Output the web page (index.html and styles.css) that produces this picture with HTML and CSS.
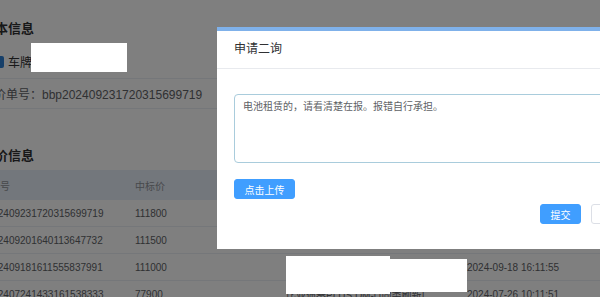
FILE: index.html
```html
<!DOCTYPE html>
<html lang="zh-CN">
<head>
  <meta charset="UTF-8" />
  <meta name="viewport" content="width=device-width, initial-scale=1.0"/>
  <title>申请二询</title>
  <link rel="stylesheet" href="styles.css">
</head>
<body>
  <div class="page">
    <div class="section-title">基本信息</div>
    <div class="info-row">
      <span class="check"></span>
      <span>车牌</span>
    </div>
    <div class="info-row plain">报价单号：bbp202409231720315699719</div>

    <div class="section-title second">报价信息</div>
    <table class="bids">
      <tr class="head">
        <th class="c1">报价单号</th>
        <th class="c2">中标价</th>
        <th class="c3">车型</th>
        <th class="c4">报价时间</th>
      </tr>
      <tr>
        <td>bbp202409231720315699719</td>
        <td>111800</td>
        <td>比亚迪 秦PLUS</td>
        <td>2024-09-23 17:20:31</td>
      </tr>
      <tr>
        <td>bbp202409201640113647732</td>
        <td>111500</td>
        <td>比亚迪 秦PLUS</td>
        <td>2024-09-20 16:40:11</td>
      </tr>
      <tr>
        <td>bbp202409181611555837991</td>
        <td>111000</td>
        <td>比亚迪 秦PLUS</td>
        <td>2024-09-18 16:11:55</td>
      </tr>
      <tr>
        <td>bbp202407241433161538333</td>
        <td>77900</td>
        <td class="model">比亚迪秦PLUS DM-i [同类刷新]</td>
        <td>2024-07-26 10:11:51</td>
      </tr>
    </table>
  </div>

  <div class="mask"></div>

  <div class="dialog">
    <div class="dialog-head">申请二询</div>
    <div class="dialog-body">
      <textarea class="reason" readonly>电池租赁的，请看清楚在报。报错自行承担。</textarea>
      <button class="btn primary upload">点击上传</button>
    </div>
    <div class="dialog-foot">
      <button class="btn primary">提交</button>
      <button class="btn">取消</button>
    </div>
  </div>

  <!-- redactions -->
  <div class="blank plate"></div>
  <div class="blank cell-a"></div>
  <div class="blank cell-b"></div>
</body>
</html>
```

FILE: styles.css
```css
body {
  font-family: "Liberation Sans", "Noto Sans CJK SC", sans-serif;
  margin: 0;
  padding: 0;
  background: #fff;
  color: #606266;
  overflow: hidden;
  height: 297px;
}
.page {
  margin-left: -40px;
  width: 700px;
}
.section-title {
  margin-top: 19px;
  padding-left: 22px;
  height: 20px;
  line-height: 20px;
  font-size: 13px;
  font-weight: bold;
  color: #303133;
}
.section-title.second {
  margin-top: 37px;
}
.info-row {
  display: flex;
  align-items: center;
  gap: 4px;
  padding: 6px 0 0 32px;
  height: 33px;
  font-size: 12px;
  color: #303133;
  border-bottom: 1px solid #ebeef5;
}
.info-row.plain {
  padding: 0 0 0 22px;
  height: 29px;
  color: #606266;
}
.check {
  width: 12px;
  height: 12px;
  border-radius: 2px;
  background: #2d7fd3;
}
.bids {
  margin-top: 4px;
  border-collapse: collapse;
  font-size: 10px;
  width: 700px;
}
.bids th,
.bids td {
  padding: 0 0 0 10px;
  text-align: left;
  white-space: nowrap;
  border-bottom: 1px solid #ebeef5;
}
.bids th {
  height: 30px;
  font-weight: normal;
  color: #909399;
  background: #e6eef8;
  border-bottom: 0;
}
.bids td {
  height: 26px;
}
.c1 { width: 155px; }
.c2 { width: 141px; }
.c3 { width: 171px; }
.model {
  padding-top: 12px;
}
.mask {
  position: fixed;
  inset: 0;
  background: rgba(0, 0, 0, 0.5);
}
.dialog {
  position: absolute;
  left: 217px;
  top: 27px;
  width: 420px;
  background: #fff;
  border-top: 4px solid #7fb1ea;
}
.dialog-head {
  height: 37px;
  line-height: 36px;
  padding-left: 17px;
  font-size: 12px;
  color: #303133;
  border-bottom: 1px solid #e8eaee;
}
.dialog-body {
  padding: 25px 17px 0;
}
.reason {
  display: block;
  box-sizing: border-box;
  width: 100%;
  height: 69px;
  padding: 4px 8px;
  border: 1px solid #a9ccdc;
  border-radius: 4px;
  font-family: inherit;
  font-size: 10px;
  line-height: 16px;
  color: #606266;
  resize: none;
  outline: none;
}
.btn {
  height: 20px;
  padding: 0 10px;
  border: 1px solid #dcdfe6;
  border-radius: 3px;
  background: #fff;
  color: #606266;
  font-family: inherit;
  font-size: 10px;
  white-space: nowrap;
}
.btn.primary {
  background: #409eff;
  border-color: #409eff;
  color: #fff;
}
.upload {
  display: block;
  margin-top: 16px;
  width: 61px;
  padding: 0;
}
.dialog-foot {
  display: flex;
  gap: 10px;
  padding: 5px 0 25px 323px;
}
.dialog-foot .btn {
  width: 41px;
  padding: 0;
}
.blank {
  position: absolute;
  background: #fff;
}
.plate { left: 31px; top: 43px; width: 96px; height: 29px; }
.cell-a { left: 286px; top: 256px; width: 104px; height: 38px; }
.cell-b { left: 390px; top: 259px; width: 77px; height: 33px; }
```
